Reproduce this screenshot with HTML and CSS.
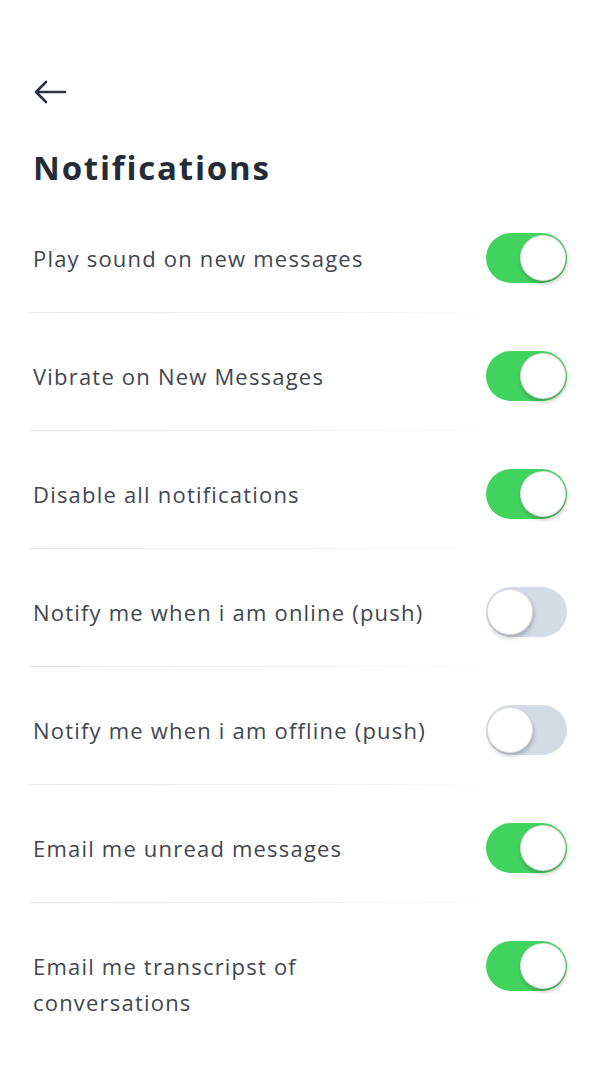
FILE: index.html
```html
<!DOCTYPE html>
<html>
<head>
<meta charset="utf-8"/>
<link rel="stylesheet" href="styles.css">
<title>Notifications</title>
</head>
<body>
<div class="Page">
  <div class="TopBar">
    <svg class="BackIcon" width="34" height="24" viewBox="0 0 34 24">
      <path d="M32 12 H3 M13 2 L3 12 L13 22" fill="none" stroke="#2b323d" stroke-width="2.6" stroke-linecap="round" stroke-linejoin="round"/>
    </svg>
  </div>

  <h1 class="Title">Notifications</h1>

  <div class="SettingList">
    <div class="SettingRow">
      <div class="SettingLabel">Play sound on new messages</div>
      <div class="Toggle on"><span class="Knob"></span></div>
    </div>
    <div class="SettingRow">
      <div class="SettingLabel">Vibrate on New Messages</div>
      <div class="Toggle on"><span class="Knob"></span></div>
    </div>
    <div class="SettingRow">
      <div class="SettingLabel">Disable all notifications</div>
      <div class="Toggle on"><span class="Knob"></span></div>
    </div>
    <div class="SettingRow">
      <div class="SettingLabel">Notify me when i am online (push)</div>
      <div class="Toggle"><span class="Knob"></span></div>
    </div>
    <div class="SettingRow">
      <div class="SettingLabel">Notify me when i am offline (push)</div>
      <div class="Toggle"><span class="Knob"></span></div>
    </div>
    <div class="SettingRow">
      <div class="SettingLabel">Email me unread messages</div>
      <div class="Toggle on"><span class="Knob"></span></div>
    </div>
    <div class="SettingRow last">
      <div class="SettingLabel">Email me transcripst of conversations</div>
      <div class="Toggle on"><span class="Knob"></span></div>
    </div>
  </div>
</div>
</body>
</html>
```

FILE: styles.css
```css
body {
  margin: 0;
  background-color: #ffffff;
  font-family: "Open Sans", Lato, sans-serif;
  color: #42464e;
}

.Page {
  padding: 0 33px;
}

.TopBar {
  padding-top: 80px;
  height: 24px;
}

.BackIcon {
  display: block;
}

.Title {
  margin: 44px 0 0 0;
  font-size: 33px;
  line-height: 40px;
  font-weight: 700;
  letter-spacing: 1.8px;
  color: #262c36;
}

.SettingList {
  margin-top: 7px;
}

.SettingRow {
  display: flex;
  align-items: flex-start;
  justify-content: space-between;
  padding: 38px 0 30px 0;
  position: relative;
}

.SettingRow::after {
  content: "";
  position: absolute;
  left: -4px;
  bottom: 0;
  width: 480px;
  height: 1px;
  background: linear-gradient(to right, #e4e6ea, #f3f4f6 70%, rgba(255,255,255,0));
}

.SettingRow.last::after {
  display: none;
}

.SettingLabel {
  flex: 1;
  max-width: 400px;
  padding-top: 7px;
  font-size: 22px;
  line-height: 36px;
  letter-spacing: 1.2px;
}

.Toggle {
  width: 81px;
  height: 50px;
  border-radius: 25px;
  background-color: #d3dbe5;
  position: relative;
  flex-shrink: 0;
}

.Toggle.on {
  background-color: #42d35f;
}

.Knob {
  position: absolute;
  top: 2px;
  left: 1px;
  width: 44px;
  height: 44px;
  border-radius: 50%;
  background-color: #ffffff;
  border: 1px solid rgba(0, 0, 0, 0.12);
  box-shadow: 1px 3px 4px rgba(0, 0, 0, 0.22);
}

.Toggle.on .Knob {
  left: auto;
  right: 1px;
}
```
